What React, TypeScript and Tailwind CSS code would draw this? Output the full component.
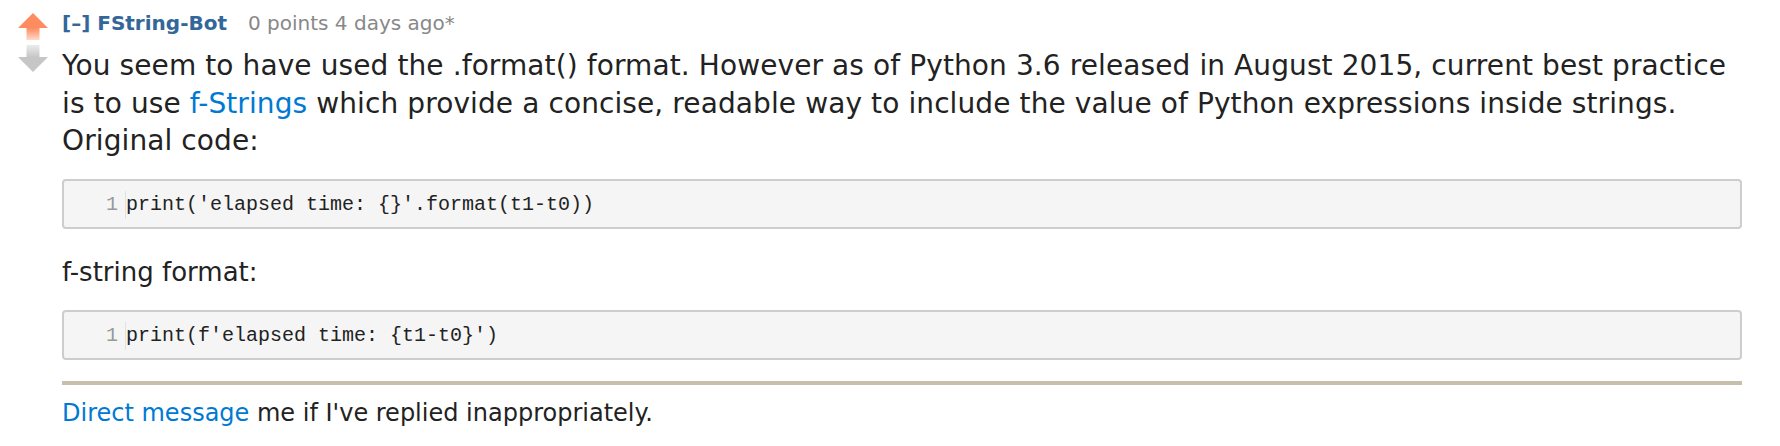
function UpArrow() {
  return (
    <svg width="30" height="27" viewBox="0 0 30 27">
      <defs>
        <linearGradient id="upShaft" x1="0" y1="0" x2="0" y2="1">
          <stop offset="0" stopColor="#ff8b60" />
          <stop offset="1" stopColor="#ffd9c8" />
        </linearGradient>
      </defs>
      <polygon points="15,0 30,15 0,15" fill="#ff8b60" />
      <rect x="8.5" y="15" width="13" height="12" fill="url(#upShaft)" />
    </svg>
  );
}

function DownArrow() {
  return (
    <svg width="30" height="27" viewBox="0 0 30 27">
      <defs>
        <linearGradient id="downShaft" x1="0" y1="0" x2="0" y2="1">
          <stop offset="0" stopColor="#ececec" />
          <stop offset="1" stopColor="#c6c6c6" />
        </linearGradient>
      </defs>
      <rect x="8.5" y="0" width="13" height="12" fill="url(#downShaft)" />
      <polygon points="0,12 30,12 15,27" fill="#c6c6c6" />
    </svg>
  );
}

function CodeBlock({ code }: { code: string }) {
  return (
    <div className="h-[50px] overflow-hidden rounded-[4px] border-2 border-[#cdcdcd] bg-[#f5f5f5] font-['Liberation_Mono',monospace] text-[20px] leading-[28px]">
      <div className="flex pt-[10px]">
        <div className="w-[62px] border-r border-[#e2e2e2] pr-[7px] text-right text-[#999]">1</div>
        <div className="whitespace-pre text-[#222]">{code}</div>
      </div>
    </div>
  );
}

export default function App() {
  return (
    <div className="min-h-screen bg-white font-['DejaVu_Sans',Verdana,sans-serif] text-[#222]">
      <div className="flex pt-[11px]">
        <div className="flex w-[62px] flex-col gap-[5px] pl-[18px] pt-[2px]">
          <UpArrow />
          <DownArrow />
        </div>
        <div className="w-[1680px]">
          <div className="text-[20px] leading-[24px]">
            <span className="font-bold text-[#369]">[–] FString-Bot</span>
            <span className="ml-[21px] text-[#888]">0 points 4 days ago*</span>
          </div>
          <p className="mt-[12px] whitespace-nowrap text-[28px] leading-[37.5px] tracking-[0.1px]">
            You seem to have used the .format() format. However as of Python 3.6 released in August 2015, current best
            practice
            <br />
            is to use <span className="text-[#0079d3]">f-Strings</span> which provide a concise, readable way to include
            the value of Python expressions inside strings.
            <br />
            Original code:
          </p>
          <div className="mt-[19px]">
            <CodeBlock code="print('elapsed time: {}'.format(t1-t0))" />
          </div>
          <p className="mt-[25px] text-[26px] leading-[37.5px]">f-string format:</p>
          <div className="mt-[19px]">
            <CodeBlock code="print(f'elapsed time: {t1-t0}')" />
          </div>
          <div className="mt-[21px] h-[4px] bg-[#c6bfab]" />
          <p className="mt-[10px] text-[24px] leading-[37.5px]">
            <span className="text-[#0079d3]">Direct message</span> me if I've replied inappropriately.
          </p>
        </div>
      </div>
    </div>
  );
}
